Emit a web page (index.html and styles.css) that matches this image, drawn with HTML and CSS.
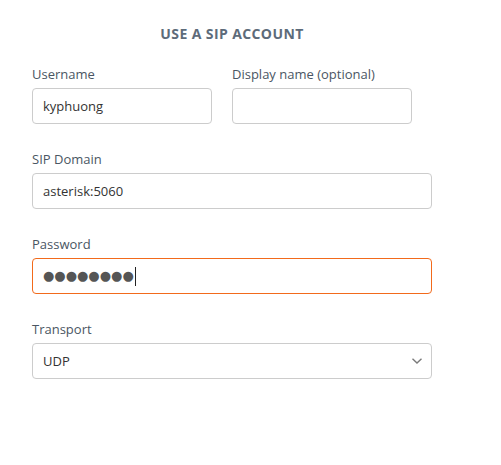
FILE: index.html
```html
<!DOCTYPE html>
<html>
<head>
<meta charset="utf-8">
<link rel="stylesheet" href="styles.css">
</head>
<body>
<div class="panel">
  <h1 class="title">USE A SIP ACCOUNT</h1>
  <div class="row">
    <div class="field half">
      <label class="label">Username</label>
      <div class="input">kyphuong</div>
    </div>
    <div class="field half">
      <label class="label">Display name (optional)</label>
      <div class="input"></div>
    </div>
  </div>
  <div class="field">
    <label class="label">SIP Domain</label>
    <div class="input">asterisk:5060</div>
  </div>
  <div class="field">
    <label class="label">Password</label>
    <div class="input focused"><span class="dots">●●●●●●●●</span><span class="caret"></span></div>
  </div>
  <div class="field">
    <label class="label">Transport</label>
    <div class="input select"><span>UDP</span>
      <svg class="chev" width="12" height="8" viewBox="0 0 12 8"><path d="M1.5 1.8 L6 6 L10.5 1.8" fill="none" stroke="#7a7a7a" stroke-width="1.4"/></svg>
    </div>
  </div>
</div>
</body>
</html>
```
FILE: styles.css
```css
html, body {
  margin: 0;
  padding: 0;
  background: #fff;
}
body {
  font-family: "Open Sans", "Liberation Sans", sans-serif;
}
.panel {
  width: 400px;
  padding: 24px 0 0 32px;
}
.title {
  margin: 0 0 20px 0;
  font-size: 14px;
  line-height: 20px;
  font-weight: 700;
  color: #5d6b7a;
  text-align: center;
  letter-spacing: 0.4px;
}
.row {
  display: flex;
  gap: 20px;
  width: 380px;
}
.field {
  display: flex;
  flex-direction: column;
  gap: 4px;
  margin-bottom: 25px;
}
.half {
  width: 180px;
}
.label {
  font-size: 13px;
  line-height: 20px;
  color: #4a5663;
}
.input {
  box-sizing: border-box;
  height: 36px;
  border: 1px solid #cccccc;
  border-radius: 4px;
  padding: 0 10px;
  display: flex;
  align-items: center;
  font-size: 13px;
  color: #333;
}
.focused {
  border-color: #f26a1b;
}
.dots {
  font-family: "DejaVu Sans", sans-serif;
  font-size: 13px;
  line-height: 20px;
  color: #555;
}
.caret {
  display: inline-block;
  width: 1px;
  height: 19px;
  background: #222;
  margin-left: 1px;
}
.select {
  justify-content: space-between;
  padding-right: 8px;
}
.chev {
  margin-right: 0;
}
```
